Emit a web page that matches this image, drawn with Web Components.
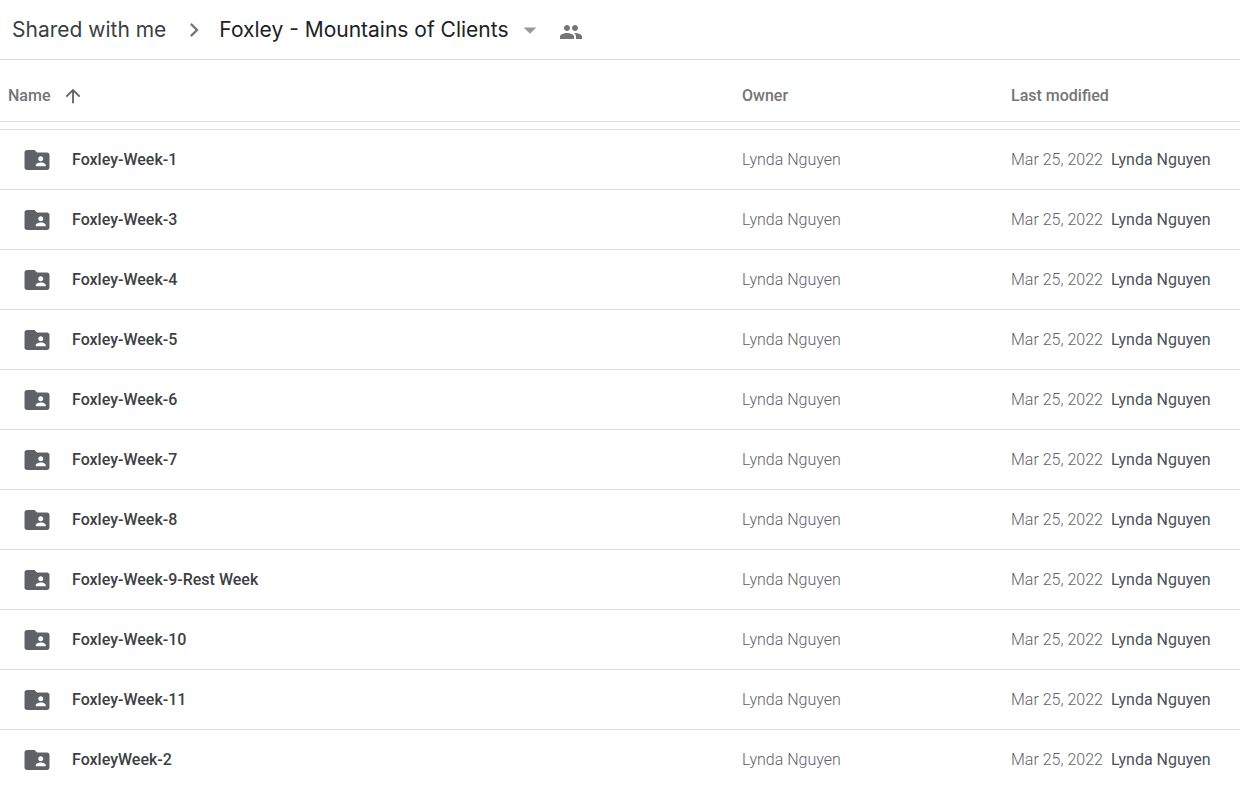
<!DOCTYPE html>
<html lang="en">
<head>
<meta charset="utf-8">
<title>Foxley - Mountains of Clients</title>
<style>
  html, body {
    height: 100%;
    margin: 0;
    background: #fff;
  }
  body {
    font-family: Roboto, "Liberation Sans", sans-serif;
    font-size: 16px;
    line-height: 24px;
    color: #3c4043;
  }
</style>
</head>
<body>
<drive-page>
  <drive-breadcrumb slot="header" parent="Shared with me">Foxley - Mountains of Clients</drive-breadcrumb>
  <drive-list></drive-list>
</drive-page>

<script>
(function () {
  const ICONS = {
    chevron: 'M10 6L8.59 7.41 13.17 12l-4.58 4.59L10 18l6-6z',
    caret: 'M7 10l5 5 5-5z',
    people: 'M16 11c1.66 0 2.99-1.34 2.99-3S17.66 5 16 5s-3 1.34-3 3 1.34 3 3 3zm-8 0c1.66 0 2.99-1.34 2.99-3S9.66 5 8 5 5 6.34 5 8s1.34 3 3 3zm0 2c-2.33 0-7 1.17-7 3.5V19h14v-2.5c0-2.33-4.67-3.5-7-3.5zm8 0c-.29 0-.62.02-.97.05 1.16.84 1.97 1.97 1.97 3.45V19h6v-2.5c0-2.33-4.67-3.5-7-3.5z',
    up: 'M4 12l1.41 1.41L11 7.83V20h2V7.83l5.58 5.59L20 12l-8-8-8 8z',
    folder: 'M20 6h-8l-2-2H4c-1.1 0-1.99.9-1.99 2L2 18c0 1.1.9 2 2 2h16c1.1 0 2-.9 2-2V8c0-1.1-.9-2-2-2zm-5 3c1.1 0 2 .9 2 2s-.9 2-2 2-2-.9-2-2 .9-2 2-2zm4 8h-8v-1c0-1.33 2.67-2 4-2s4 .67 4 2v1z',
  };

  const FOLDERS = [
    'Foxley-Week-1',
    'Foxley-Week-3',
    'Foxley-Week-4',
    'Foxley-Week-5',
    'Foxley-Week-6',
    'Foxley-Week-7',
    'Foxley-Week-8',
    'Foxley-Week-9-Rest Week',
    'Foxley-Week-10',
    'Foxley-Week-11',
    'FoxleyWeek-2',
  ].map((name) => ({ name, owner: 'Lynda Nguyen', date: 'Mar 25, 2022', by: 'Lynda Nguyen' }));

  class DriveIcon extends HTMLElement {
    constructor() {
      super();
      this.attachShadow({ mode: 'open' });
    }

    connectedCallback() {
      this.shadowRoot.innerHTML = `
        <style>
          :host { display: block; flex: none; width: var(--icon-size, 24px); height: var(--icon-size, 24px); }
          svg { display: block; width: 100%; height: 100%; fill: currentColor; }
        </style>
        <svg viewBox="0 0 24 24" aria-hidden="true"><path d="${ICONS[this.getAttribute('name')]}"/></svg>`;
    }
  }

  class DrivePage extends HTMLElement {
    constructor() {
      super();
      this.attachShadow({ mode: 'open' }).innerHTML = `
        <style>
          :host { display: flex; flex-direction: column; height: 100%; }
          header { flex: none; border-bottom: 1px solid #dadce0; }
          main { flex: 1; min-height: 0; overflow-y: auto; scrollbar-width: none; }
        </style>
        <header><slot name="header"></slot></header>
        <main><slot></slot></main>`;
    }
  }

  class DriveBreadcrumb extends HTMLElement {
    constructor() {
      super();
      this.attachShadow({ mode: 'open' });
    }

    connectedCallback() {
      this.shadowRoot.innerHTML = `
        <style>
          :host { display: block; font-family: Inter, Roboto, sans-serif; font-size: 21px; line-height: 30px; }
          nav { display: flex; align-items: center; height: 59px; padding-left: 12px; }
          a { color: #3c4043; text-decoration: none; white-space: nowrap; }
          button {
            display: flex;
            align-items: center;
            padding: 0;
            border: 0;
            background: none;
            font: inherit;
            color: #202124;
            white-space: nowrap;
            cursor: pointer;
          }
          .chevron { --icon-size: 28px; margin: 0 11px 0 14px; color: #777; }
          .caret { --icon-size: 30px; margin-left: 6px; color: #999; }
          .people { margin: 4px 0 0 14px; color: #757575; }
        </style>
        <nav aria-label="Breadcrumb">
          <a href="#shared">${this.getAttribute('parent')}</a>
          <drive-icon class="chevron" name="chevron"></drive-icon>
          <button type="button" aria-haspopup="menu"><slot></slot><drive-icon class="caret" name="caret"></drive-icon></button>
          <button type="button" class="people" aria-label="Manage people"><drive-icon name="people"></drive-icon></button>
        </nav>`;
    }
  }

  class DriveList extends HTMLElement {
    constructor() {
      super();
      this.attachShadow({ mode: 'open' });
    }

    connectedCallback() {
      this.shadowRoot.innerHTML = `
        <style>
          :host { display: block; }
          table { width: 100%; border-collapse: separate; border-spacing: 0; table-layout: fixed; }
          .owner { width: 269px; }
          .modified { width: 229px; }
          th, td { box-sizing: border-box; padding: 0; text-align: left; white-space: nowrap; }
          th {
            height: 62px;
            padding-top: 10px;
            border-bottom: 1px solid #dadce0;
            font-weight: 500;
            color: #757575;
          }
          th:first-child { padding-left: 8px; }
          th button {
            display: flex;
            align-items: center;
            gap: 12px;
            padding: 0;
            border: 0;
            background: none;
            font: inherit;
            color: inherit;
            cursor: pointer;
          }
          th drive-icon { --icon-size: 22px; color: #5f6368; }
          tbody::before { content: ""; display: block; height: 7px; }
          td { height: 60px; border-top: 1px solid #dadce0; font-weight: 300; color: #5f6368; }
          .name { display: flex; align-items: center; gap: 20px; padding-left: 22px; font-weight: 500; color: #3c4043; }
          .name drive-icon { --icon-size: 30px; color: #5f6368; }
          .by { margin-left: 8px; font-weight: 400; color: #4d5156; }
        </style>
        <table>
          <colgroup><col><col class="owner"><col class="modified"></colgroup>
          <thead>
            <tr>
              <th scope="col" aria-sort="ascending"><button type="button">Name<drive-icon name="up"></drive-icon></button></th>
              <th scope="col">Owner</th>
              <th scope="col">Last modified</th>
            </tr>
          </thead>
          <tbody>${FOLDERS.map((f) => this._createRow(f)).join('')}</tbody>
        </table>`;
    }

    _createRow(folder) {
      return `
        <tr>
          <td><div class="name"><drive-icon name="folder"></drive-icon>${folder.name}</div></td>
          <td>${folder.owner}</td>
          <td>${folder.date}<span class="by">${folder.by}</span></td>
        </tr>`;
    }
  }

  customElements.define('drive-icon', DriveIcon);
  customElements.define('drive-page', DrivePage);
  customElements.define('drive-breadcrumb', DriveBreadcrumb);
  customElements.define('drive-list', DriveList);
})();
</script>
</body>
</html>
